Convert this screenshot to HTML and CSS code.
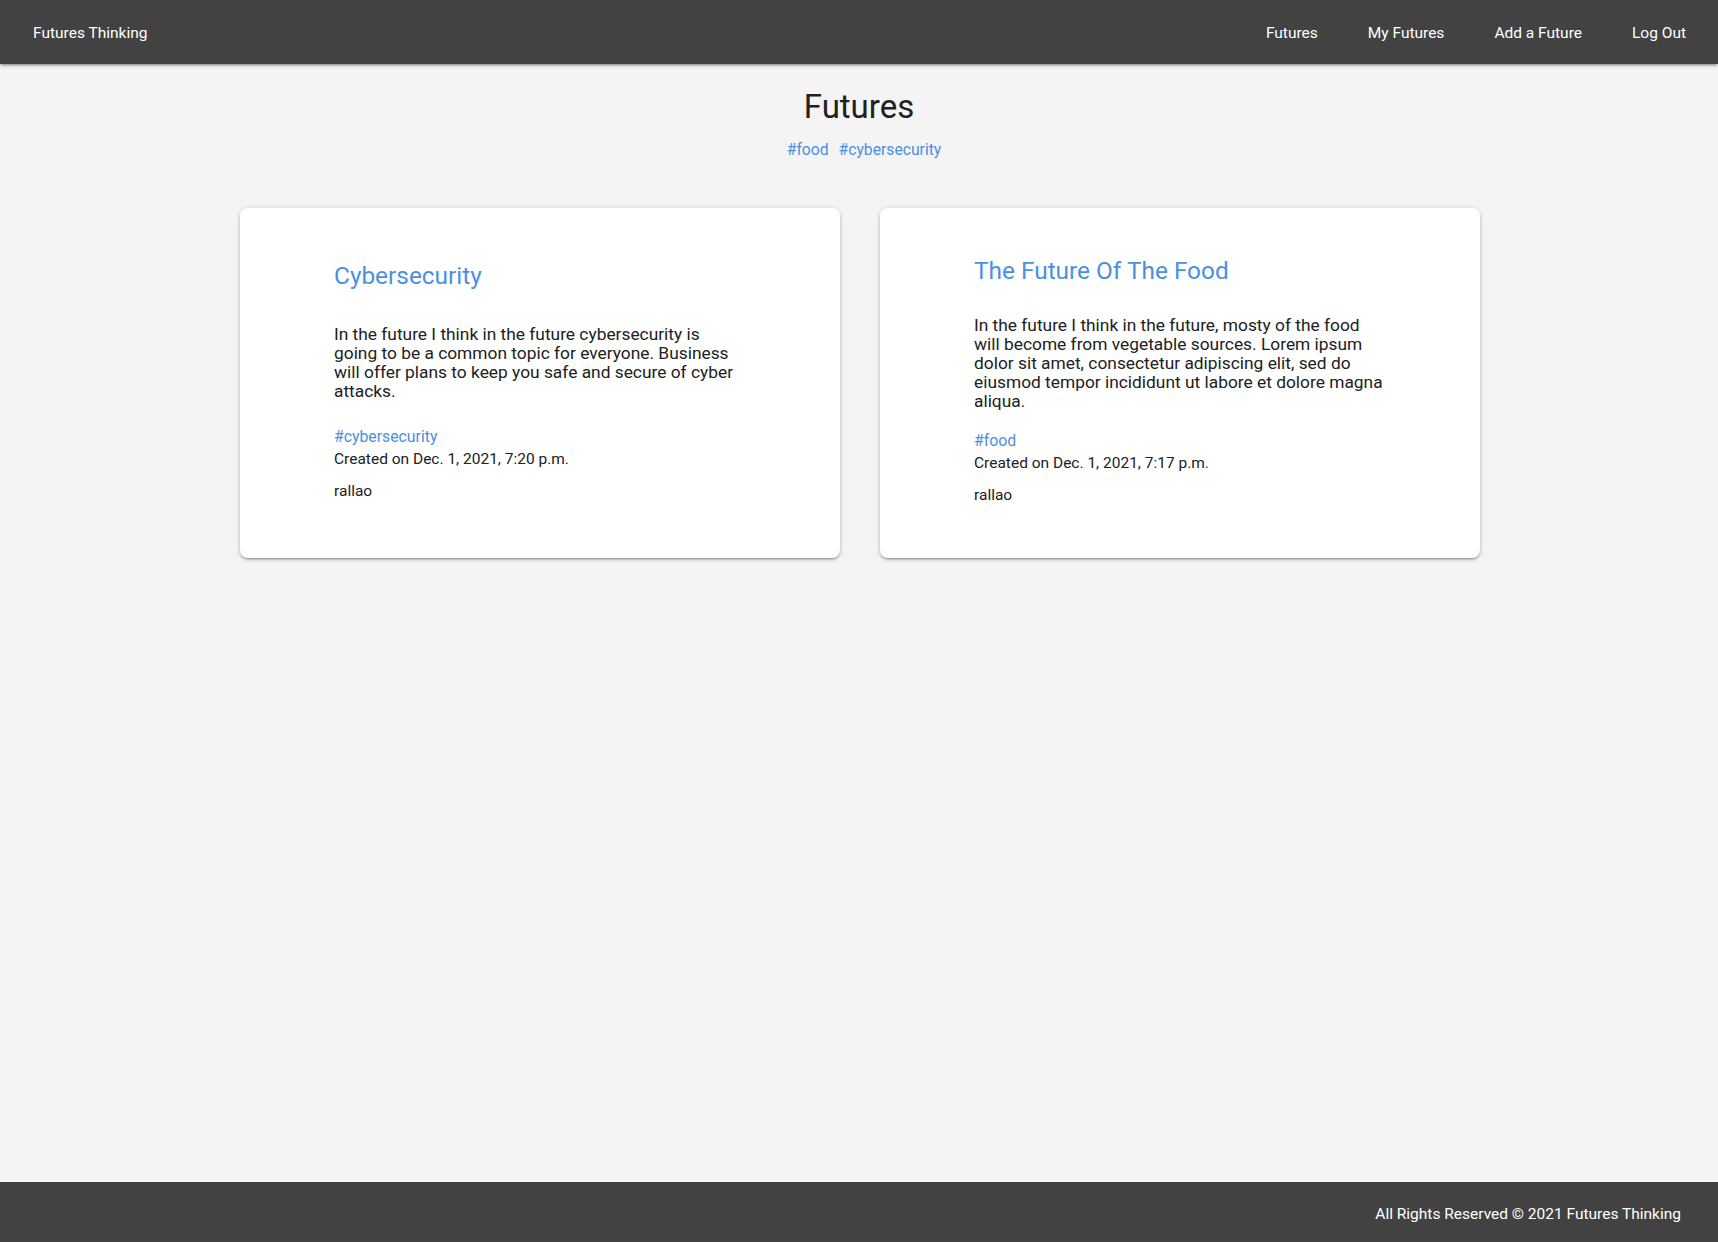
FILE: index.html
```html
<!DOCTYPE html>
<html lang="en">
<head>
<meta charset="utf-8">
<title>Futures Thinking</title>
<link rel="stylesheet" href="styles.css">
</head>
<body>
<header class="topbar">
  <a class="brand" href="#">Futures Thinking</a>
  <nav class="nav">
    <a class="nav-link" href="#">Futures</a>
    <a class="nav-link" href="#">My Futures</a>
    <a class="nav-link" href="#">Add a Future</a>
    <a class="nav-link" href="#">Log Out</a>
  </nav>
</header>

<main class="main">
  <h1 class="page-title">Futures</h1>
  <div class="tag-list">
    <a class="tag" href="#">#food</a>
    <a class="tag" href="#">#cybersecurity</a>
  </div>

  <section class="cards">
    <article class="card">
      <h2 class="card-title">Cybersecurity</h2>
      <p class="card-text">In the future I think in the future cybersecurity is going to be a common topic for everyone. Business will offer plans to keep you safe and secure of cyber attacks.</p>
      <div class="card-meta">
        <a class="card-tag" href="#">#cybersecurity</a>
        <div class="card-date">Created on Dec. 1, 2021, 7:20 p.m.</div>
        <div class="card-author">rallao</div>
      </div>
    </article>
    <article class="card">
      <h2 class="card-title">The Future Of The Food</h2>
      <p class="card-text">In the future I think in the future, mosty of the food will become from vegetable sources. Lorem ipsum dolor sit amet, consectetur adipiscing elit, sed do eiusmod tempor incididunt ut labore et dolore magna aliqua.</p>
      <div class="card-meta">
        <a class="card-tag" href="#">#food</a>
        <div class="card-date">Created on Dec. 1, 2021, 7:17 p.m.</div>
        <div class="card-author">rallao</div>
      </div>
    </article>
  </section>
</main>

<footer class="footer">
  <span class="footer-text">All Rights Reserved © 2021 Futures Thinking</span>
</footer>
</body>
</html>
```
FILE: styles.css
```css
* { box-sizing: border-box; }
html, body { height: 100%; }
body {
  margin: 0;
  background: #f4f4f4;
  color: #212121;
  font-family: Roboto, "Noto Sans", Arial, sans-serif;
  display: flex;
  flex-direction: column;
  min-height: 100vh;
}
a { text-decoration: none; }

.topbar {
  height: 64px;
  flex: 0 0 64px;
  background: #424242;
  display: flex;
  align-items: center;
  justify-content: space-between;
  padding: 2px 7px 0 33px;
  box-shadow: 0 2px 2px 0 rgba(0,0,0,.14), 0 3px 1px -2px rgba(0,0,0,.12), 0 1px 5px 0 rgba(0,0,0,.2);
  position: relative;
  z-index: 2;
}
.brand {
  color: #fff;
  font-size: 15.5px;
  line-height: 62px;
}
.nav { display: flex; height: 62px; }
.nav-link {
  color: #fff;
  font-size: 15.5px;
  line-height: 62px;
  padding: 0 25px;
}

.main {
  flex: 1 0 auto;
  display: flex;
  flex-direction: column;
  align-items: center;
  padding-top: 23px;
}
.page-title {
  margin: 0;
  font-size: 33px;
  line-height: 40px;
  font-weight: 400;
  color: #212121;
}
.tag-list {
  margin-top: 13px;
  display: flex;
  height: 20px;
  align-items: center;
}
.tag {
  color: #4a90e2;
  font-size: 15.7px;
  line-height: 20px;
  margin-left: 10px;
}

.cards {
  margin-top: 48px;
  margin-left: 2px;
  display: grid;
  grid-template-columns: 600px 600px;
  gap: 40px;
}
.card {
  height: 350px;
  background: #fff;
  border-radius: 8px;
  padding: 28px 95px 32px 94px;
  display: flex;
  flex-direction: column;
  justify-content: space-evenly;
  box-shadow: 0 2px 2px 0 rgba(0,0,0,.14), 0 3px 1px -2px rgba(0,0,0,.12), 0 1px 5px 0 rgba(0,0,0,.2);
}
.card-title {
  margin: 0 0 10px;
  font-size: 24.4px;
  line-height: 28px;
  font-weight: 400;
  color: #4a90e2;
}
.card-text {
  margin: 0;
  font-size: 17.35px;
  line-height: 19px;
  color: #212121;
}
.card-meta {
  display: flex;
  flex-direction: column;
  font-size: 15.5px;
  line-height: 19px;
}
.card-tag {
  color: #4a90e2;
  font-size: 15.8px;
}
.card-date { margin-top: 4px; color: #212121; }
.card-author { margin-top: 13px; color: #212121; }

.footer {
  flex: 0 0 60px;
  height: 60px;
  background: #424242;
  display: flex;
  align-items: center;
  justify-content: flex-end;
  padding: 0 37px 0 0;
}
.footer-text {
  color: #fff;
  font-size: 15.5px;
  line-height: 20px;
  padding-top: 4px;
}
```
